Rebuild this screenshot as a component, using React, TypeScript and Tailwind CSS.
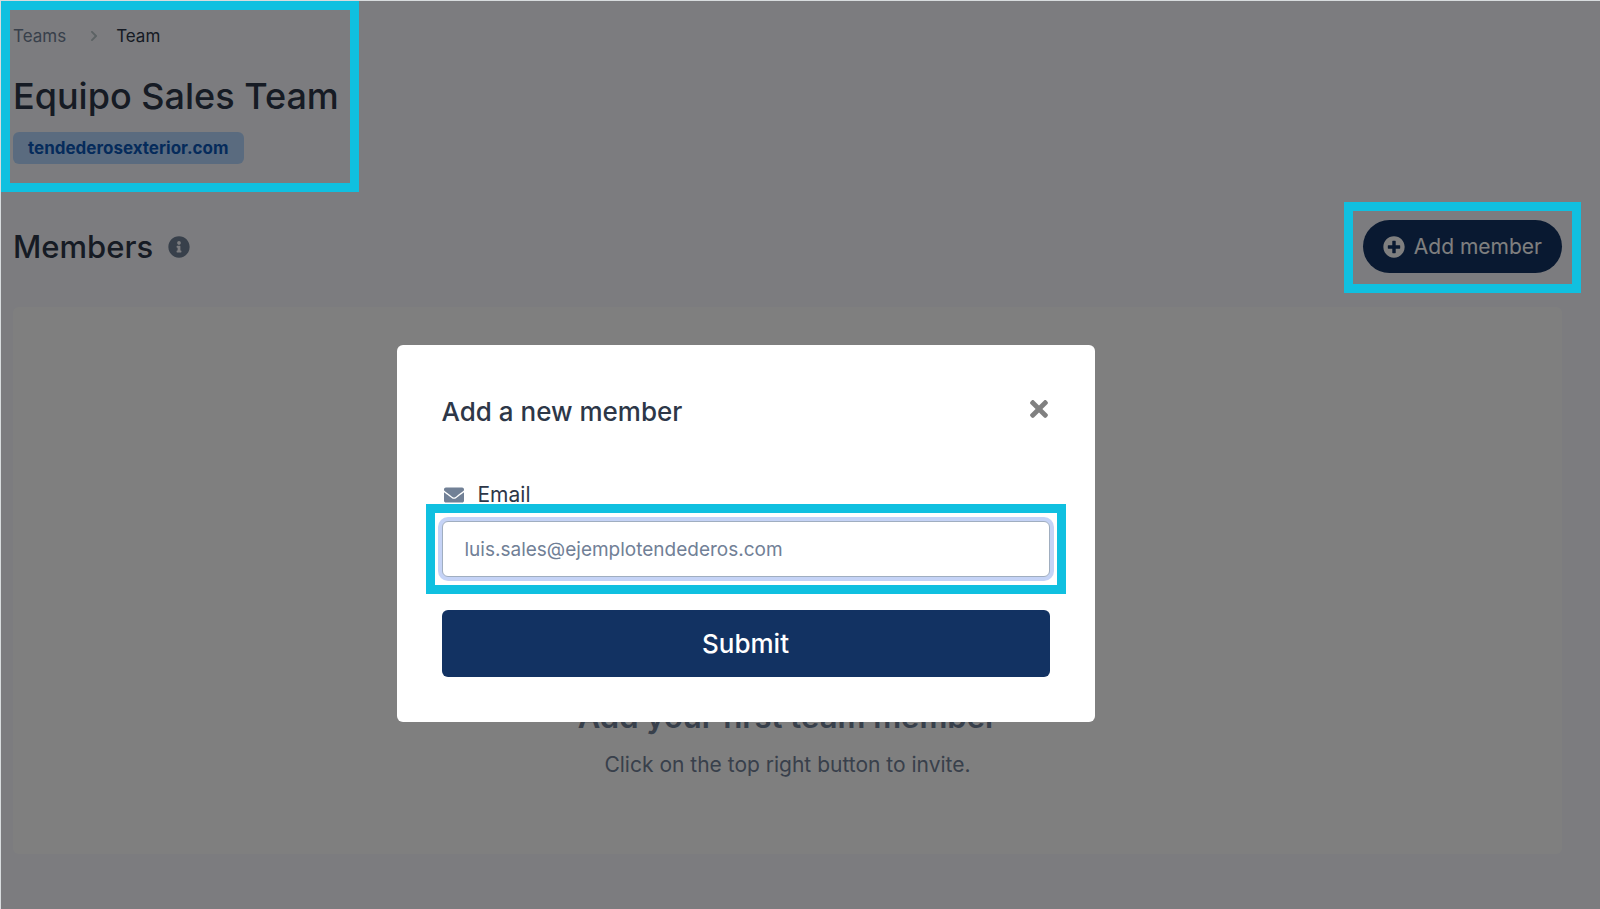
import { useState } from 'react';
import { FaChevronRight, FaEnvelope, FaInfoCircle, FaPlusCircle, FaTimes } from 'react-icons/fa';

function Highlight({ className }: { className: string }) {
  return <span aria-hidden="true" className={`pointer-events-none absolute z-20 border-[9px] border-[#10c0e0] ${className}`} />;
}

function AddMemberModal({ onClose }: { onClose: () => void }) {
  const [email, setEmail] = useState('');

  return (
    <div className="absolute inset-0 z-10 flex items-start justify-center bg-black/50 pt-[344px] pr-[110px]">
      <div role="dialog" aria-labelledby="modal-title" className="w-full max-w-[698px] rounded-md bg-white px-[45px] pt-11 pb-[45px]">
        <div className="flex items-start justify-between">
          <h3 id="modal-title" className="text-[26px] leading-[46px] font-medium text-[#2d3748]">Add a new member</h3>
          <button type="button" onClick={onClose} aria-label="Close" className="flex h-10 items-center text-[#808080]">
            <FaTimes size={26} className="-mr-0.5" />
          </button>
        </div>

        <form className="mt-11" onSubmit={(e) => e.preventDefault()}>
          <label htmlFor="email" className="flex items-center gap-3.5 text-[21px] leading-8 text-[#2d3748]">
            <FaEnvelope size={20} className="ml-0.5 text-[#718096]" />
            Email
          </label>
          <div className="relative mt-2.5">
            <input
              id="email"
              type="email"
              value={email}
              onChange={(e) => setEmail(e.target.value)}
              placeholder="luis.sales@ejemplotendederos.com"
              className="block h-14 w-full rounded-md border border-[#a0aec0] bg-white px-[22px] text-[19px] text-[#718096] ring-4 ring-[#c5d3f6] outline-none placeholder:text-[#718096]"
            />
            <Highlight className="-inset-x-4 -inset-y-[17px]" />
          </div>
          <button type="submit" className="mt-[33px] block h-[67px] w-full rounded-md bg-[#123262] text-[26px] font-medium text-white">
            Submit
          </button>
        </form>
      </div>
    </div>
  );
}

export default function App() {
  const [open, setOpen] = useState(true);

  return (
    <main className="relative min-h-screen border-t border-l border-[#d8dcde] bg-[#f8f9fe] pr-[38px] pb-14 pl-3 font-['Inter','Liberation_Sans',sans-serif] text-[#2d3748]">
      <header className="relative w-fit pt-[19px]">
        <nav aria-label="Breadcrumb" className="flex items-center text-[17px] leading-8">
          <a href="#teams" className="text-[#718096]">Teams</a>
          <FaChevronRight size={12} className="mr-4 ml-[22px] text-[#b9c4c8]" />
          <span>Team</span>
        </nav>
        <h1 className="mt-5 text-[36px] leading-12 font-medium">Equipo Sales Team</h1>
        <span className="mt-3 block w-fit rounded-md bg-[#b5d7ff] px-[15px] text-[17px] leading-8 font-bold text-[#0b57b7]">
          tendederosexterior.com
        </span>
        <Highlight className="top-0 -right-5 -bottom-7 -left-3" />
      </header>

      <section>
        <div className="mt-14 flex items-center justify-between">
          <h2 className="flex items-center gap-[15px] text-[31px] leading-12 font-medium">
            Members
            <FaInfoCircle size={22} className="text-[#718096]" />
          </h2>
          <div className="relative">
            <button
              type="button"
              onClick={() => setOpen(true)}
              className="flex h-[53px] items-center gap-[9px] rounded-full bg-[#123262] px-5 text-[21px] text-white"
            >
              <FaPlusCircle size={22} />
              Add member
            </button>
            <Highlight className="-inset-x-[19px] -top-[18px] -bottom-5" />
          </div>
        </div>

        <div className="mt-[34px] flex h-[547px] flex-col items-center justify-end rounded-md bg-white pb-[71px] text-[#718096]">
          <h3 className="text-[31px] leading-12 font-semibold">Add your first team member</h3>
          <p className="mt-1.5 text-[21px] leading-9">Click on the top right button to invite.</p>
        </div>
      </section>

      {open && <AddMemberModal onClose={() => setOpen(false)} />}
    </main>
  );
}
